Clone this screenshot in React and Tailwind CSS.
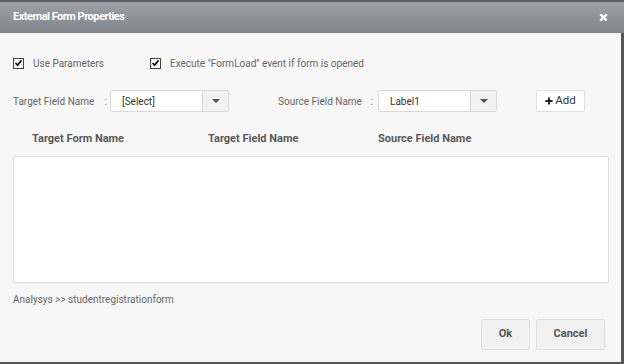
import React, { useState } from "react";

const Check = ({ checked, onChange, label }) => (
  <label className="flex items-center gap-[9px] cursor-pointer">
    <span
      onClick={onChange}
      className="w-[11px] h-[11px] border border-[#444] bg-white flex items-center justify-center"
    >
      {checked && (
        <svg viewBox="0 0 12 12" className="w-[10px] h-[10px]">
          <path d="M2 6 L4.8 8.8 L10 2.5" fill="none" stroke="#111" strokeWidth="2.3" />
        </svg>
      )}
    </span>
    <span>{label}</span>
  </label>
);

const Select = ({ value }) => (
  <div className="flex w-[119px] h-[22px] bg-white border border-[#d9d9d9] rounded-[2px]">
    <div className="flex-1 flex items-center pl-[11px] text-[10px] text-[#333]">{value}</div>
    <div className="w-[26px] flex items-center justify-center border-l border-[#d9d9d9] bg-[#f1f1f1]">
      <svg viewBox="0 0 8 4" className="w-[8px] h-[4px]">
        <path d="M0 0 L8 0 L4 4 Z" fill="#555" />
      </svg>
    </div>
  </div>
);

export default function App() {
  const [useParams, setUseParams] = useState(true);
  const [execLoad, setExecLoad] = useState(true);

  return (
    <div
      className="w-[624px] h-[364px] flex flex-col bg-[#f7f7f7] border-b-2 border-[#555] text-[#666] text-[10px]"
      style={{ fontFamily: "Roboto, 'Liberation Sans', sans-serif" }}
    >
      <div className="h-[33px] shrink-0 flex items-center justify-between pl-[13px] pr-[16px] border-t-2 border-[#5c6066] bg-gradient-to-b from-[#9ea2a8] to-[#80848b]">
        <span className="text-white font-bold text-[11px] tracking-[-0.5px]">External Form Properties</span>
        <svg viewBox="0 0 10 10" className="w-[9px] h-[9px]">
          <path d="M1.5 1.5 L8.5 8.5 M8.5 1.5 L1.5 8.5" stroke="#fff" strokeWidth="2.6" />
        </svg>
      </div>

      <div className="flex-1 flex flex-col pl-[13px] pr-[12px] border-r-[3px] border-[#555]">
        <div className="flex items-center h-[20px] mt-[20px]">
          <div className="w-[137px]">
            <Check checked={useParams} onChange={() => setUseParams((p) => !p)} label="Use Parameters" />
          </div>
          <Check
            checked={execLoad}
            onChange={() => setExecLoad((p) => !p)}
            label={'Execute "FormLoad" event if form is opened'}
          />
        </div>

        <div className="flex items-center mt-[17px]">
          <div className="w-[97px] flex justify-between pr-[3px]">
            <span>Target Field Name</span>
            <span>:</span>
          </div>
          <Select value="[Select]" />
          <div className="w-[100px] ml-[49px] flex justify-between pr-[5px]">
            <span>Source Field Name</span>
            <span>:</span>
          </div>
          <Select value="Label1" />
          <button className="ml-[39px] h-[22px] w-[49px] flex items-center justify-center gap-[2px] bg-white border border-[#e0e0e0] rounded-[2px] text-[#333] text-[11.5px]">
            <svg viewBox="0 0 10 10" className="w-[8px] h-[8px]">
              <path d="M5 0.5 V9.5 M0.5 5 H9.5" stroke="#222" strokeWidth="2.4" />
            </svg>
            Add
          </button>
        </div>

        <div className="flex items-center h-[14px] mt-[20px] font-bold text-[11px] text-[#595959]">
          <span className="w-[176px] pl-[19px]">Target Form Name</span>
          <span className="w-[170px] pl-[19px]">Target Field Name</span>
          <span className="pl-[19px]">Source Field Name</span>
        </div>

        <div className="mt-[10px] h-[127px] bg-white border border-[#dcdcdc] rounded-[2px]" />

        <div className="mt-[9px] text-[#666]">Analysys &gt;&gt; studentregistrationform</div>

        <div className="flex justify-end gap-[6px] mt-[12px] pr-[4px]">
          <button className="w-[49px] h-[31px] bg-[#f1f1f1] border border-[#dedede] rounded-[2px] font-bold text-[11px] text-[#555]">
            Ok
          </button>
          <button className="w-[69px] h-[31px] bg-[#f1f1f1] border border-[#dedede] rounded-[2px] font-bold text-[11px] text-[#555]">
            Cancel
          </button>
        </div>
      </div>
    </div>
  );
}
